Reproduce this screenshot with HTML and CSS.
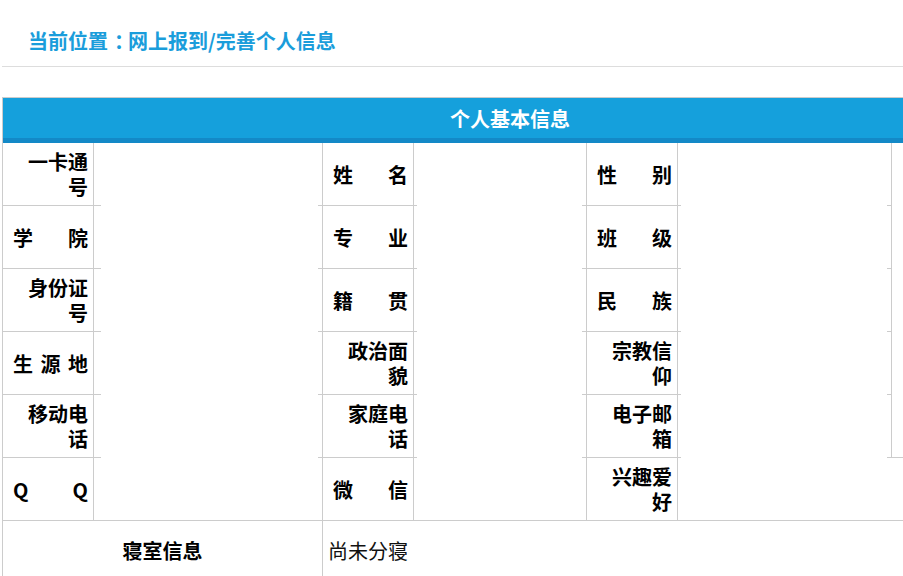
FILE: index.html
```html
<!DOCTYPE html>
<html lang="zh-CN">
<head>
<meta charset="utf-8">
<title>完善个人信息</title>
<link rel="stylesheet" href="styles.css">
</head>
<body>
<div class="page">
  <div class="crumb">当前位置<span class="punct">：</span>网上报到/完善个人信息</div>
  <div class="info">
    <div class="head">个人基本信息</div>

    <div class="lab"><span>一卡通号</span></div>
    <div class="val v1"></div>
    <div class="lab j"><span>姓名</span></div>
    <div class="val"></div>
    <div class="lab j"><span>性别</span></div>
    <div class="val"></div>
    <div class="photo"></div>

    <div class="lab j"><span>学院</span></div>
    <div class="val v1"></div>
    <div class="lab j"><span>专业</span></div>
    <div class="val"></div>
    <div class="lab j"><span>班级</span></div>
    <div class="val"></div>

    <div class="lab"><span>身份证号</span></div>
    <div class="val v1"></div>
    <div class="lab j"><span>籍贯</span></div>
    <div class="val"></div>
    <div class="lab j"><span>民族</span></div>
    <div class="val"></div>

    <div class="lab j"><span>生源地</span></div>
    <div class="val v1"></div>
    <div class="lab"><span>政治面貌</span></div>
    <div class="val"></div>
    <div class="lab"><span>宗教信仰</span></div>
    <div class="val"></div>

    <div class="lab"><span>移动电话</span></div>
    <div class="val v1"></div>
    <div class="lab"><span>家庭电话</span></div>
    <div class="val"></div>
    <div class="lab"><span>电子邮箱</span></div>
    <div class="val"></div>

    <div class="lab j"><span>Q Q</span></div>
    <div class="val end"></div>
    <div class="lab j"><span>微信</span></div>
    <div class="val end"></div>
    <div class="lab"><span>兴趣爱好</span></div>
    <div class="val end wide"></div>

    <div class="dorm-l">寝室信息</div>
    <div class="dorm-v">尚未分寝</div>
  </div>
</div>
</body>
</html>
```
FILE: styles.css
```css
html, body {
  margin: 0;
  padding: 0;
  overflow: hidden;
  background: #fff;
}

body {
  font-family: "Noto Sans CJK SC", "Noto Sans", sans-serif;
  color: #000;
}

.page {
  padding-left: 2px;
}

.crumb {
  padding: 26px 0 10px 26px;
  line-height: 30px;
  font-size: 20px;
  font-weight: bold;
  color: #1a9ddb;
  border-bottom: 1px solid #dddddd;
}

.crumb .punct {
  font-feature-settings: "halt";
  padding: 0 4px 0 6px;
}

.info {
  margin-top: 30px;
  width: 1015px;
  box-sizing: border-box;
  display: grid;
  grid-template-columns: 91px 229px 91px 173px 91px 214px 125px;
  grid-template-rows: 45px repeat(6, 63px) 58px;
  border-left: 1px solid #cccccc;
  border-top: 1px solid #cccccc;
}

.info > div {
  box-sizing: border-box;
}

.head {
  grid-column: 1 / -1;
  background: #15a0dc;
  border-bottom: 5px solid #1389c7;
  color: #fff;
  font-size: 20px;
  font-weight: bold;
  display: flex;
  align-items: center;
  justify-content: center;
}

.lab {
  border-right: 1px solid #cccccc;
  border-bottom: 1px solid #cccccc;
  padding: 0 5px 0 10px;
  display: flex;
  align-items: center;
  font-size: 20px;
  font-weight: bold;
  line-height: 25px;
}

.lab span {
  width: 100%;
  text-align: right;
}

.lab.j span {
  text-align: justify;
  text-align-last: justify;
}

.val {
  border-right: 1px solid #cccccc;
  background:
    linear-gradient(#cccccc, #cccccc) left bottom / 3px 1px no-repeat,
    linear-gradient(#cccccc, #cccccc) right bottom / 4px 1px no-repeat;
}

.val.v1 {
  background:
    linear-gradient(#cccccc, #cccccc) left bottom / 7px 1px no-repeat,
    linear-gradient(#cccccc, #cccccc) right bottom / 4px 1px no-repeat;
}

.val.end {
  border-bottom: 1px solid #cccccc;
  background: none;
}

.val.wide {
  grid-column: span 2;
  border-right: none;
}

.photo {
  grid-column: 7;
  grid-row: 2 / span 5;
  border-bottom: 1px solid #cccccc;
}

.dorm-l {
  grid-column: span 2;
  border-right: 1px solid #cccccc;
  display: flex;
  align-items: center;
  justify-content: center;
  font-size: 20px;
  font-weight: bold;
}

.dorm-v {
  grid-column: span 5;
  padding-left: 5px;
  display: flex;
  align-items: center;
  font-size: 20px;
  color: #111;
}
```
